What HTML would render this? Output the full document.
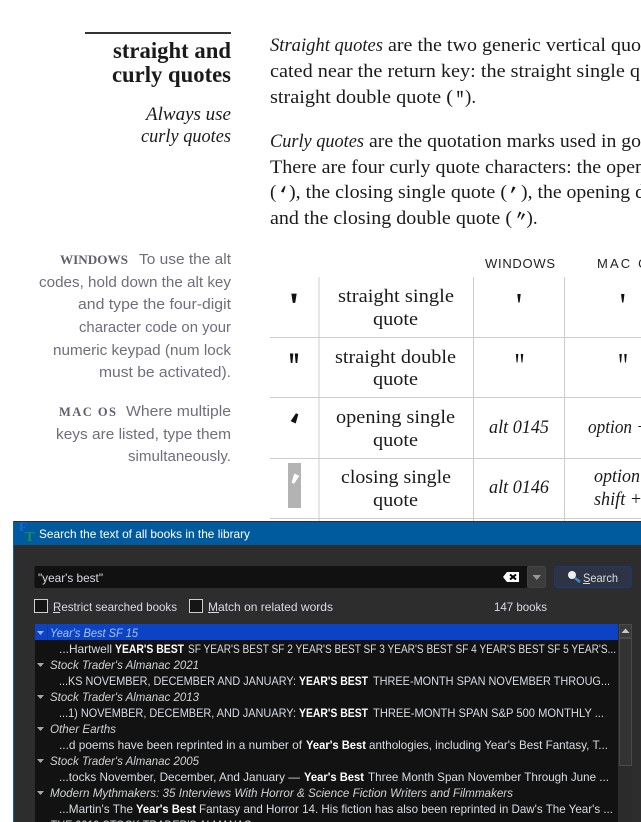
<!DOCTYPE html>
<html><head><meta charset="utf-8"><title>Straight and curly quotes</title>
<style>
html,body{margin:0;padding:0;background:#fff;width:641px;height:822px;overflow:hidden}
svg{display:block;position:absolute;left:0;top:0}
.s{font-family:"Liberation Serif",serif;fill:#1a1a1a;font-size:19px}
.i{font-style:italic}
.b{font-weight:bold}
.g{font-family:"Liberation Sans",sans-serif;fill:#6e6e7c;font-size:14.5px}
.gb{font-family:"Liberation Serif",serif;font-weight:bold;fill:#5f5f6e;font-size:12.5px}
.h{font-family:"Liberation Sans",sans-serif;fill:#222;font-size:13px}
.u{font-family:"Liberation Sans",sans-serif;font-size:12px;fill:#d8dde2}
.w{fill:#fff}
.t{font-style:italic;fill:#cfd3d6}
.q{font-family:"Liberation Serif",serif;fill:#111;text-anchor:middle}
.q36{font-size:36px}
.q26{font-size:26px;stroke:#111;stroke-width:.3px}
.qb{font-weight:bold}
</style></head><body>
<svg width="641" height="822" viewBox="0 0 641 822" xmlns="http://www.w3.org/2000/svg">
<rect x="85" y="32" width="146" height="2" fill="#333"/>
<g class="s">
<text class="b" x="113" y="58" style="font-size:23px" textLength="118" lengthAdjust="spacingAndGlyphs">straight and</text>
<text class="b" x="112" y="82" style="font-size:23px" textLength="119" lengthAdjust="spacingAndGlyphs">curly quotes</text>
<text class="i" x="146" y="120" textLength="85" lengthAdjust="spacingAndGlyphs">Always use</text>
<text class="i" x="141" y="142" textLength="90" lengthAdjust="spacingAndGlyphs">curly quotes</text>

<text class="i" x="270" y="51" textLength="113" lengthAdjust="spacingAndGlyphs">Straight quotes</text>
<text x="388" y="51" textLength="253" lengthAdjust="spacingAndGlyphs">are the two generic vertical quo</text>
<text x="270" y="77" textLength="370" lengthAdjust="spacingAndGlyphs">cated near the return key: the straight single q</text>
<text x="270" y="103" textLength="183" lengthAdjust="spacingAndGlyphs">straight double quote (</text>
<text x="465" y="103">).</text>
<text class="i" x="270" y="147" textLength="94" lengthAdjust="spacingAndGlyphs">Curly quotes</text>
<text x="369" y="147" textLength="272" lengthAdjust="spacingAndGlyphs">are the quotation marks used in go</text>
<text x="270" y="173" textLength="375" lengthAdjust="spacingAndGlyphs">There are four curly quote characters: the open</text>
<text x="270" y="198">(</text>
<text x="289" y="198" textLength="218" lengthAdjust="spacingAndGlyphs">), the closing single quote (</text>
<text x="521" y="198" textLength="124" lengthAdjust="spacingAndGlyphs">), the opening d</text>
<text x="270" y="224" textLength="242" lengthAdjust="spacingAndGlyphs">and the closing double quote (</text>
<text x="526.500" y="224">).</text>
</g>

<text class="q q26" transform="translate(460 108.500) scale(.7 1)">"</text>
<text class="q q26" transform="translate(283.500 189.500) rotate(205) translate(0 14.300)">'</text>
<text class="q q26" transform="translate(513 189.500) rotate(25) translate(0 14.300)">'</text>
<text class="q q26" transform="translate(521 215.500) rotate(25) scale(.8 1) translate(0 14.300)">"</text>

<g>
<text class="gb" x="60" y="264" textLength="68" lengthAdjust="spacingAndGlyphs">WINDOWS</text>
<text class="g" x="139" y="264" textLength="92" lengthAdjust="spacingAndGlyphs">To use the alt</text>
<text class="g" x="39" y="287" textLength="192" lengthAdjust="spacingAndGlyphs">codes, hold down the alt key</text>
<text class="g" x="78" y="309" textLength="153" lengthAdjust="spacingAndGlyphs">and type the four-digit</text>
<text class="g" x="79" y="332" textLength="152" lengthAdjust="spacingAndGlyphs">character code on your</text>
<text class="g" x="53" y="355" textLength="178" lengthAdjust="spacingAndGlyphs">numeric keypad (num lock</text>
<text class="g" x="99" y="377" textLength="132" lengthAdjust="spacingAndGlyphs">must be activated).</text>
<text class="gb" x="59" y="416" textLength="57" lengthAdjust="spacing">MAC OS</text>
<text class="g" x="126" y="416" textLength="105" lengthAdjust="spacingAndGlyphs">Where multiple</text>
<text class="g" x="56" y="439" textLength="175" lengthAdjust="spacingAndGlyphs">keys are listed, type them</text>
<text class="g" x="128" y="461" textLength="103" lengthAdjust="spacingAndGlyphs">simultaneously.</text>
</g>

<text class="h" x="485" y="268" textLength="70" lengthAdjust="spacing">WINDOWS</text>
<text class="h" x="597" y="268" textLength="62" lengthAdjust="spacing">MAC OS</text>

<g stroke="#cccccc" stroke-width="1">
<path d="M319 277V522M473.500 277V522M564.500 277V522"/>
<path d="M270 337.500H641M270 397.500H641M270 458.500H641M270 518.500H641"/>
</g>

<g class="s">
<text x="338" y="302" textLength="116" lengthAdjust="spacingAndGlyphs">straight single</text>
<text x="373" y="325" textLength="45" lengthAdjust="spacingAndGlyphs">quote</text>
<text x="335" y="363" textLength="121" lengthAdjust="spacingAndGlyphs">straight double</text>
<text x="373" y="385" textLength="45" lengthAdjust="spacingAndGlyphs">quote</text>
<text x="336" y="423" textLength="119" lengthAdjust="spacingAndGlyphs">opening single</text>
<text x="373" y="446" textLength="45" lengthAdjust="spacingAndGlyphs">quote</text>
<text x="341" y="483" textLength="110" lengthAdjust="spacingAndGlyphs">closing single</text>
<text x="373" y="506" textLength="45" lengthAdjust="spacingAndGlyphs">quote</text>
<text class="i" x="489" y="433" textLength="60" lengthAdjust="spacingAndGlyphs">alt 0145</text>
<text class="i" x="489" y="493" textLength="60" lengthAdjust="spacingAndGlyphs">alt 0146</text>
<text class="i" x="588" y="433" textLength="60" lengthAdjust="spacingAndGlyphs">option +</text>
<text class="i" x="594" y="482" textLength="46" lengthAdjust="spacingAndGlyphs">option</text>
<text class="i" x="594" y="505" textLength="48" lengthAdjust="spacingAndGlyphs">shift +</text>
</g>

<text class="q q36 qb" x="294" y="317.500" style="stroke:#111;stroke-width:.7px">'</text>
<text class="q q36" transform="translate(294 377.500) scale(.72 1)" style="stroke:#111;stroke-width:1.1px">"</text>
<text class="q q36" x="519" y="317.500">'</text>
<text class="q q36" x="622.700" y="317.500">'</text>
<text class="q q36" transform="translate(519.500 377.500) scale(.72 1)">"</text>
<text class="q q36" transform="translate(623 377.500) scale(.72 1)">"</text>
<text class="q q36 qb" style="stroke:#111;stroke-width:.9px" transform="translate(295 418.500) rotate(205) translate(0 19.800)">'</text>
<rect x="288" y="463" width="13" height="45" fill="#b3b3b3"/>
<text class="q q36 qb" style="fill:#fff;stroke:#fff;stroke-width:.9px" transform="translate(295 478.500) rotate(25) translate(0 19.800)">'</text>

<!-- dialog -->
<rect x="13" y="521" width="628" height="301" fill="#2d2d2d"/>
<rect x="13" y="522" width="628" height="23" fill="#005b9e"/>
<rect x="13" y="521" width="1" height="301" fill="#0a62a8"/>
<text x="19" y="531" style="font-family:'Liberation Serif',serif;font-weight:bold;font-size:13px" fill="#1f63d0">F</text>
<text x="25" y="541" style="font-family:'Liberation Serif',serif;font-weight:bold;font-size:14px" fill="#1d8f55">T</text>
<text class="u w" x="39" y="538" textLength="211" lengthAdjust="spacingAndGlyphs">Search the text of all books in the library</text>

<rect x="34.500" y="566" width="493" height="22" rx="2" fill="#111"/>
<text class="u" x="38" y="582" textLength="65" lengthAdjust="spacingAndGlyphs">"year's best"</text>
<path d="M503 577L507 572H519V582H507Z" fill="#fff"/>
<path d="M510 574.500L516 579.500M516 574.500L510 579.500" stroke="#000" stroke-width="2"/>
<rect x="527.500" y="566.500" width="18" height="21" rx="2" fill="#3c3c3c" stroke="#444"/>
<path d="M532.500 575H541L536.800 580Z" fill="#9a9a9a"/>
<rect x="554.500" y="566.500" width="77" height="21" rx="3" fill="#2f3444" stroke="#16387f"/>
<circle cx="572" cy="575" r="4" fill="#eee"/>
<path d="M575 578L580 582" stroke="#3b8fc4" stroke-width="2.500"/>
<text class="u" x="583" y="582" textLength="35" lengthAdjust="spacingAndGlyphs">Search</text>
<rect x="583" y="583" width="7" height="1" fill="#d8dde2"/>

<rect x="34.500" y="599.500" width="13" height="13" fill="#151515" stroke="#d0d0d0"/>
<text class="u" x="53" y="611" textLength="124" lengthAdjust="spacingAndGlyphs">Restrict searched books</text>
<rect x="53" y="612" width="7" height="1" fill="#d8dde2"/>
<rect x="189.500" y="599.500" width="13" height="13" fill="#151515" stroke="#d0d0d0"/>
<text class="u" x="208" y="611" textLength="125" lengthAdjust="spacingAndGlyphs">Match on related words</text>
<rect x="208" y="612" width="11" height="1" fill="#d8dde2"/>
<text class="u" x="494" y="611" textLength="53" lengthAdjust="spacingAndGlyphs">147 books</text>

<rect x="35" y="624" width="583" height="198" fill="#121212"/>
<rect x="35" y="624" width="583" height="16" fill="#0c43c4"/>
<rect x="47" y="624" width="1" height="16" fill="#0a3aa8"/>
<rect x="619" y="624" width="13" height="198" fill="#2b2b2b"/>
<rect x="619.500" y="624.500" width="12" height="13" fill="#3a3a3a" stroke="#4a4a4a"/>
<path d="M621.500 633H629.500L625.500 628.500Z" fill="#c8c8c8"/>
<rect x="619.500" y="638.500" width="12" height="127" fill="#333" stroke="#4a4a4a"/>

<g fill="#a8a8a8">
<path d="M37 631H44L40.500 635Z" fill="#9db4e8"/>
<path d="M37 663H44L40.500 667Z"/>
<path d="M37 695H44L40.500 699Z"/>
<path d="M37 727H44L40.500 731Z"/>
<path d="M37 759H44L40.500 763Z"/>
<path d="M37 791H44L40.500 795Z"/>
</g>
<g class="u">
<text class="t" style="fill:#a9c4ee" x="50" y="637" textLength="88" lengthAdjust="spacingAndGlyphs">Year's Best SF 15</text>
<text x="59" y="653" textLength="53" lengthAdjust="spacingAndGlyphs">...Hartwell</text>
<text class="b w" x="115" y="653" textLength="69" lengthAdjust="spacingAndGlyphs">YEAR'S BEST</text>
<text x="188" y="653" textLength="428" lengthAdjust="spacingAndGlyphs">SF YEAR'S BEST SF 2 YEAR'S BEST SF 3 YEAR'S BEST SF 4 YEAR'S BEST SF 5 YEAR'S...</text>
<text class="t" x="50" y="669" textLength="149" lengthAdjust="spacingAndGlyphs">Stock Trader's Almanac 2021</text>
<text x="59" y="685" textLength="237" lengthAdjust="spacingAndGlyphs">...KS NOVEMBER, DECEMBER AND JANUARY:</text>
<text class="b w" x="299" y="685" textLength="69" lengthAdjust="spacingAndGlyphs">YEAR'S BEST</text>
<text x="373" y="685" textLength="237" lengthAdjust="spacingAndGlyphs">THREE-MONTH SPAN NOVEMBER THROUG...</text>
<text class="t" x="50" y="701" textLength="149" lengthAdjust="spacingAndGlyphs">Stock Trader's Almanac 2013</text>
<text x="59" y="717" textLength="237" lengthAdjust="spacingAndGlyphs">...1) NOVEMBER, DECEMBER, AND JANUARY:</text>
<text class="b w" x="299" y="717" textLength="69" lengthAdjust="spacingAndGlyphs">YEAR'S BEST</text>
<text x="373" y="717" textLength="231" lengthAdjust="spacingAndGlyphs">THREE-MONTH SPAN S&amp;P 500 MONTHLY ...</text>
<text class="t" x="50" y="733" textLength="66" lengthAdjust="spacingAndGlyphs">Other Earths</text>
<text x="59" y="749" textLength="243" lengthAdjust="spacingAndGlyphs">...d poems have been reprinted in a number of</text>
<text class="b w" x="306" y="749" textLength="60" lengthAdjust="spacingAndGlyphs">Year's Best</text>
<text x="369" y="749" textLength="239" lengthAdjust="spacingAndGlyphs">anthologies, including Year's Best Fantasy, T...</text>
<text class="t" x="50" y="765" textLength="149" lengthAdjust="spacingAndGlyphs">Stock Trader's Almanac 2005</text>
<text x="59" y="781" textLength="241" lengthAdjust="spacingAndGlyphs">...tocks November, December, And January —</text>
<text class="b w" x="304" y="781" textLength="60" lengthAdjust="spacingAndGlyphs">Year's Best</text>
<text x="368" y="781" textLength="241" lengthAdjust="spacingAndGlyphs">Three Month Span November Through June ...</text>
<text class="t" x="50" y="797" textLength="463" lengthAdjust="spacingAndGlyphs">Modern Mythmakers: 35 Interviews With Horror &amp; Science Fiction Writers and Filmmakers</text>
<text x="59" y="813" textLength="74" lengthAdjust="spacingAndGlyphs">...Martin's The</text>
<text class="b w" x="136" y="813" textLength="60" lengthAdjust="spacingAndGlyphs">Year's Best</text>
<text x="199" y="813" textLength="414" lengthAdjust="spacingAndGlyphs">Fantasy and Horror 14. His fiction has also been reprinted in Daw's The Year's ...</text>
<text class="t" x="50" y="829" textLength="201" lengthAdjust="spacingAndGlyphs">THE 2019 STOCK TRADER'S ALMANAC</text>
</g>
</svg>
</body></html>
